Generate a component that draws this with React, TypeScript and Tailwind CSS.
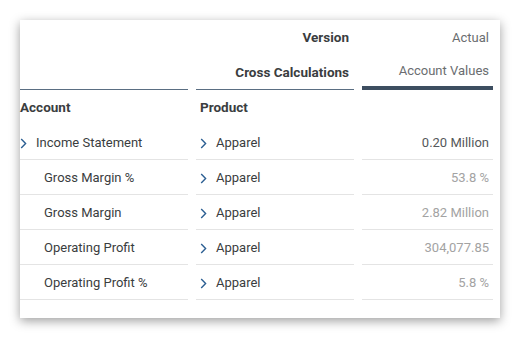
const rows = [
  { account: "Gross Margin %", value: "53.8 %" },
  { account: "Gross Margin", value: "2.82 Million" },
  { account: "Operating Profit", value: "304,077.85" },
  { account: "Operating Profit %", value: "5.8 %" },
];

const Chevron = () => (
  <svg width="7" height="11" viewBox="0 0 7 11" className="shrink-0">
    <path d="M1.2 1 L5.6 5.5 L1.2 10" fill="none" stroke="#2c5f93" strokeWidth="1.4" />
  </svg>
);

const cell = "h-[35px] flex items-center pt-[2px] border-b border-[#e4e4e4]";
const head = "h-[35px] flex items-center font-bold text-[13.5px]";

const App = () => {
  return (
    <div className="bg-white w-[522px] h-[340px] pt-[20px] pl-[20px] font-['Roboto',sans-serif] text-[13px] text-[#3a3d40]">
      <div className="w-[480px] h-[298px] bg-white shadow-[0_3px_10px_rgba(0,0,0,0.38)] pr-[7px]">
        <div className="grid grid-cols-[168px_158px_131px] gap-x-[8px]">
          {/* Header: version */}
          <div className="h-[35px]" />
          <div className={`${head} justify-end pr-[5px]`}>Version</div>
          <div className="h-[35px] flex items-center justify-end pr-[4px] text-[#6a6d70]">Actual</div>

          {/* Header: measures */}
          <div className="h-[35px] border-b border-[#5a6e82]" />
          <div className={`${head} justify-end pr-[5px] border-b border-[#5a6e82]`}>
            Cross Calculations
          </div>
          <div className="h-[35px] flex items-center justify-end pr-[4px] text-[#6a6d70] border-b-[4px] border-[#3d4e60]">
            Account Values
          </div>

          {/* Dimension headers */}
          <div className={head}>Account</div>
          <div className={`${head} pl-[4px]`}>Product</div>
          <div className="h-[35px]" />

          {/* Root row */}
          <div className={`${cell} gap-[9px]`}>
            <Chevron />
            <span>Income Statement</span>
          </div>
          <div className={`${cell} pl-[4px] gap-[9px]`}>
            <Chevron />
            <span>Apparel</span>
          </div>
          <div className={`${cell} justify-end pr-[4px] text-[#55585b]`}>0.20 Million</div>

          {rows.map((r) => (
            <div key={r.account} className="contents">
              <div className={`${cell} pl-[24px]`}>{r.account}</div>
              <div className={`${cell} pl-[4px] gap-[9px]`}>
                <Chevron />
                <span>Apparel</span>
              </div>
              <div className={`${cell} justify-end pr-[4px] text-[#a3a3a3]`}>{r.value}</div>
            </div>
          ))}
        </div>
      </div>
    </div>
  );
};

export default App;
